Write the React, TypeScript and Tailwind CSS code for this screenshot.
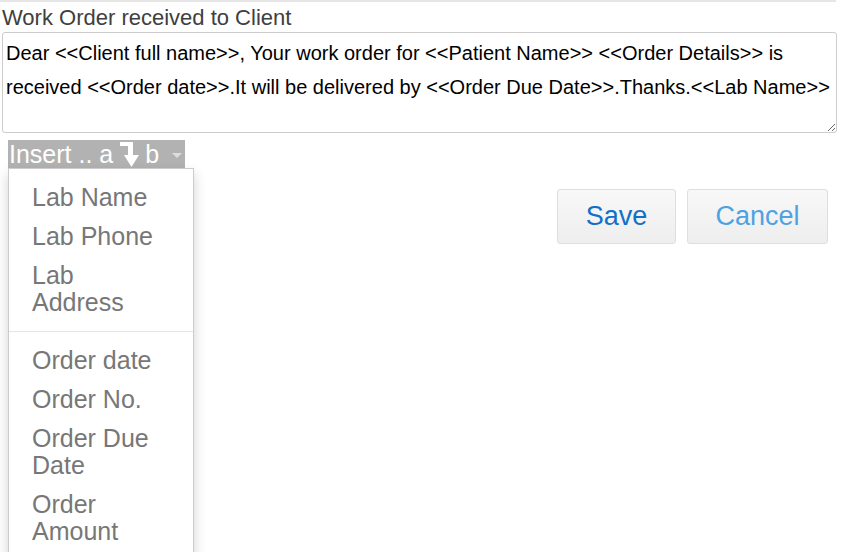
import { useState } from "react";

const MESSAGE =
  "Dear <<Client full name>>, Your work order for <<Patient Name>> <<Order Details>> is received <<Order date>>.It will be delivered by <<Order Due Date>>.Thanks.<<Lab Name>>";

const LAB_FIELDS = ["Lab Name", "Lab Phone", "Lab Address"];
const ORDER_FIELDS = ["Order date", "Order No.", "Order Due Date", "Order Amount"];

function InsertArrow() {
  return (
    <svg
      width="19"
      height="25"
      viewBox="0 0 19 25"
      className="ml-[7px] mr-[6px] inline-block align-[-3px]"
      fill="#ffffff"
    >
      <rect x="0" y="0" width="13" height="4" />
      <rect x="8" y="0" width="5" height="15" />
      <polygon points="4,13 19,13 11.5,25" />
    </svg>
  );
}

function MenuItem({ label }: { label: string }) {
  return (
    <li className="py-[6px] pl-[23px] pr-[26px] leading-[27px] text-[#777777]">
      {label}
    </li>
  );
}

export default function App() {
  const [text, setText] = useState(MESSAGE);

  return (
    <div className="w-[861px] bg-white font-['Liberation_Sans',Arial,sans-serif]">
      <div className="h-[2px] w-[836px] bg-[#e6e6e6]" />
      <label className="mt-[2px] block pl-[2px] text-[22px] leading-[28px] text-[#404040]">
        Work Order received to Client
      </label>
      <textarea
        value={text}
        onChange={(e) => setText(e.target.value)}
        className="ml-[2px] block h-[101px] w-[835px] rounded-[3px] border border-[#cccccc] px-[3px] pt-[3px] text-[20px] leading-[34px] text-black outline-none"
      />

      <div className="relative ml-[8px] mt-[7px] inline-block">
        <div className="flex h-[28px] w-[177px] items-center bg-[#b2b2b2] pl-[1px] text-[25px] leading-[28px] text-white">
          <span>Insert .. a</span>
          <InsertArrow />
          <span>b</span>
          <span className="ml-[13px] mt-[2px] h-0 w-0 border-x-[5px] border-t-[5px] border-x-transparent border-t-[#dddddd]" />
        </div>

        <ul className="absolute left-0 top-[28px] z-10 w-[186px] border border-[#cccccc] bg-white py-[9px] text-[25px] shadow-[0_6px_12px_rgba(0,0,0,0.175)]">
          {LAB_FIELDS.map((f) => (
            <MenuItem key={f} label={f} />
          ))}
          <li className="my-[9px] h-px bg-[#e5e5e5]" />
          {ORDER_FIELDS.map((f) => (
            <MenuItem key={f} label={f} />
          ))}
        </ul>
      </div>

      <div className="mt-[19px] flex w-[837px] justify-end gap-[11px] pr-[9px]">
        <button className="h-[55px] w-[119px] rounded-[3px] border border-[#dedede] bg-gradient-to-b from-[#f8f8f8] to-[#eeeeee] text-[27px] text-[#1170c8]">
          Save
        </button>
        <button className="h-[55px] w-[141px] rounded-[3px] border border-[#dedede] bg-gradient-to-b from-[#f8f8f8] to-[#eeeeee] text-[27px] text-[#4ea2e2]">
          Cancel
        </button>
      </div>
      <div className="h-[320px]" />
    </div>
  );
}
